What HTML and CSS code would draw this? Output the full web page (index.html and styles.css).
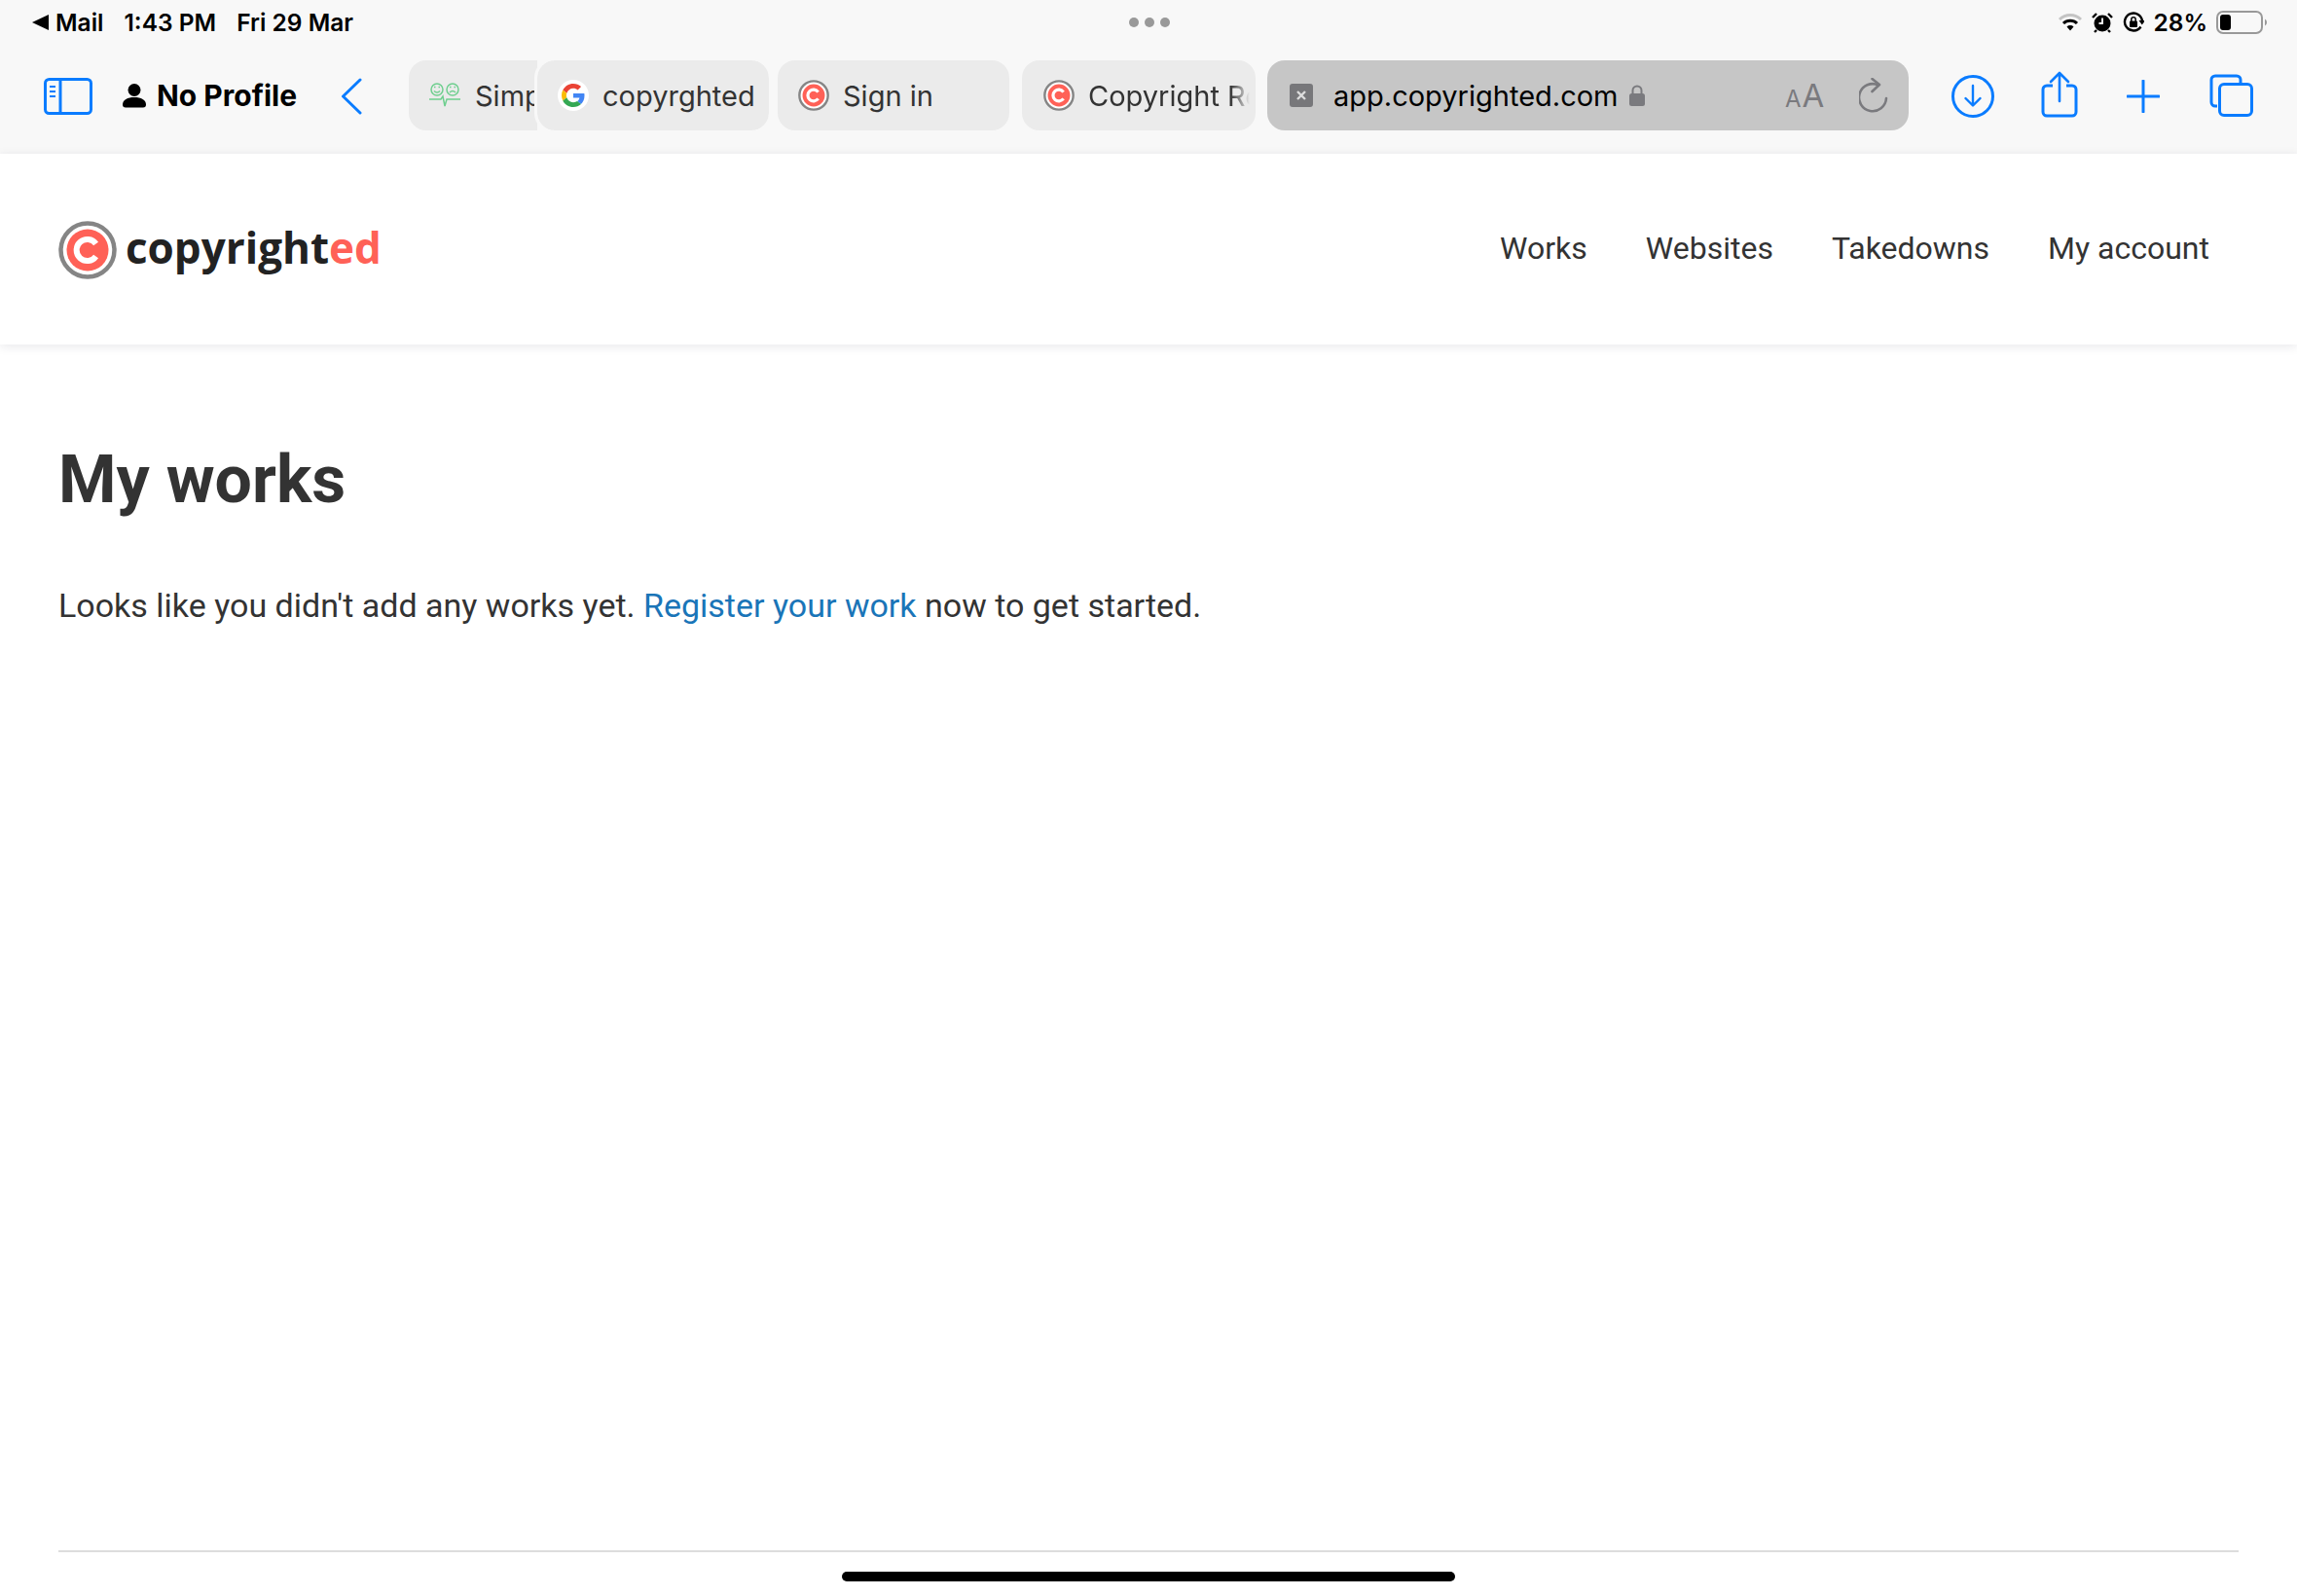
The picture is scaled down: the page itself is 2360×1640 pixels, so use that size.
FILE: index.html
```html
<!DOCTYPE html>
<html lang="en">
<head>
<meta charset="utf-8">
<title>My works</title>
<link rel="stylesheet" href="styles.css">
</head>
<body>
<svg class="defs" width="0" height="0" aria-hidden="true">
  <symbol id="c-logo" viewBox="0 0 60 60">
    <circle cx="30" cy="30" r="27.5" fill="#fff" stroke="#858585" stroke-width="4.5"/>
    <circle cx="30" cy="30" r="21.5" fill="#ff6157"/>
    <path d="M38.6 23.6a11 11 0 1 0 0 12.8" fill="none" stroke="#fff" stroke-width="6"/>
  </symbol>
</svg>
<div class="chrome">
  <div class="status">
    <div class="status-left">
      <svg class="back-tri" viewBox="0 0 17 16"><path d="M17 0v16L0 8z" fill="#000"/></svg>
      <span class="mail">Mail</span>
      <span class="time">1:43 PM</span>
      <span class="date">Fri 29 Mar</span>
    </div>
    <div class="dots"><i></i><i></i><i></i></div>
    <div class="status-right">
      <svg class="wifi" viewBox="0 0 26 20">
        <path d="M2 7a16 16 0 0 1 22 0" fill="none" stroke="#c4c4c4" stroke-width="3"/>
        <path d="M6 11a10 10 0 0 1 14 0" fill="none" stroke="#000" stroke-width="3"/>
        <path d="M9.5 14.5a5 5 0 0 1 7 0L13 18.5z" fill="#000"/>
      </svg>
      <svg class="alarm" viewBox="0 0 22 22">
        <circle cx="11" cy="12" r="8.5" fill="#000"/>
        <path d="M1 6l4-4M21 6l-4-4M5 19l-2 2M17 19l2 2" stroke="#000" stroke-width="2.4" fill="none"/>
        <path d="M11 6.5V12H7.5" stroke="#fff" stroke-width="1.8" fill="none"/>
      </svg>
      <svg class="rotlock" viewBox="0 0 22 22">
        <path d="M18.5 15.5A9 9 0 1 1 20 10" fill="none" stroke="#000" stroke-width="2.4"/>
        <path d="M16.5 9h6.5l-3.2 4.5z" fill="#000"/>
        <rect x="7" y="9.5" width="8" height="6.5" rx="1" fill="#000"/>
        <path d="M8.8 10V8a2.2 2.2 0 0 1 4.4 0v2" fill="none" stroke="#000" stroke-width="1.5"/>
      </svg>
      <span class="pct">28%</span>
      <svg class="battery" viewBox="0 0 53 24">
        <rect x="1" y="1" width="46" height="22" rx="6" fill="none" stroke="#999" stroke-width="2"/>
        <rect x="4" y="4" width="11" height="16" rx="3" fill="#000"/>
        <path d="M50 8.500a4 4 0 0 1 0 7z" fill="#999"/>
      </svg>
    </div>
  </div>
  <div class="toolbar">
    <svg class="ic-sidebar" viewBox="0 0 50 38">
      <rect x="1.500" y="1.500" width="47" height="35" rx="4" fill="none" stroke="#0a7cff" stroke-width="3"/>
      <path d="M17 2v34" stroke="#0a7cff" stroke-width="3"/>
      <path d="M6 9h6M6 14h6M6 19h6" stroke="#0a7cff" stroke-width="2"/>
    </svg>
    <div class="profile">
      <svg class="ic-person" viewBox="0 0 26 26">
        <circle cx="13" cy="7" r="6.500" fill="#000"/>
        <path d="M1 22c0-5 5-7.500 12-7.500S25 17 25 22c0 2-1 3-3 3H4c-2 0-3-1-3-3z" fill="#000"/>
      </svg>
      <span>No Profile</span>
    </div>
    <svg class="ic-back" viewBox="0 0 22 38"><path d="M20 2L2.500 19 20 36" fill="none" stroke="#0a7cff" stroke-width="3" stroke-linecap="round" stroke-linejoin="round"/></svg>
    <div class="tabs">
      <div class="tab tab-simp">
        <svg class="fav-simp" viewBox="0 0 32 26">
          <g fill="none" stroke="#6fcf8f" stroke-width="1.500">
            <circle cx="8" cy="7" r="6"/><circle cx="24" cy="7" r="6"/>
            <path d="M5 8.500q3 3 6 0M21 10q3-3 6 0"/>
            <path d="M0 17h12l2-3 2 10 2-7h14"/>
          </g>
          <path d="M5 4.500h1.500M9.500 4.500H11M21 4.500h1.500M25.500 4.500H27" stroke="#6fcf8f" stroke-width="1.500"/>
        </svg>
        <span class="tab-label clip">Simple Feedback</span>
      </div>
      <div class="tab tab-google">
        <span class="g-badge">
          <svg viewBox="0 0 48 48">
            <path fill="#ea4335" d="M24 9.500c3.500 0 6.700 1.200 9.200 3.600l6.900-6.900C35.900 2.400 30.500 0 24 0 14.600 0 6.500 5.400 2.600 13.200l8 6.200C12.500 13.600 17.800 9.500 24 9.500z"/>
            <path fill="#4285f4" d="M47 24.500c0-1.600-.1-3.100-.4-4.500H24v9h12.900c-.6 3-2.200 5.500-4.700 7.200l7.700 6C44.400 38 47 31.800 47 24.500z"/>
            <path fill="#fbbc05" d="M10.600 28.600c-.5-1.400-.8-3-.8-4.600s.3-3.200.8-4.600l-8-6.200C.9 16.500 0 20.100 0 24s.9 7.500 2.600 10.800l8-6.200z"/>
            <path fill="#34a853" d="M24 48c6.500 0 11.900-2.100 15.900-5.800l-7.700-6c-2.200 1.500-4.900 2.300-8.200 2.300-6.200 0-11.500-4.100-13.400-9.900l-8 6.200C6.500 42.600 14.600 48 24 48z"/>
          </svg>
        </span>
        <span class="tab-label">copyrghted</span>
      </div>
      <div class="tab tab-sign">
        <svg class="fav-c"><use href="#c-logo"/></svg>
        <span class="tab-label">Sign in</span>
      </div>
      <div class="tab tab-copy">
        <svg class="fav-c"><use href="#c-logo"/></svg>
        <span class="tab-label fade">Copyright Re</span>
      </div>
      <div class="address">
        <span class="x-badge">
          <svg viewBox="0 0 24 24"><path d="M8 8l8 8M16 8l-8 8" stroke="#ddd" stroke-width="2.400" fill="none"/></svg>
        </span>
        <span class="url">app.copyrighted.com</span>
        <svg class="ic-lock" viewBox="0 0 16 22">
          <rect x="0" y="9" width="16" height="13" rx="2.500" fill="#7a7a7e"/>
          <path d="M3.500 10V6a4.500 4.500 0 0 1 9 0v4" fill="none" stroke="#7a7a7e" stroke-width="2"/>
        </svg>
        <span class="aa"><small>A</small>A</span>
        <svg class="ic-reload" viewBox="0 0 30 36">
          <path d="M20 7.500A14 14 0 1 0 28 21" fill="none" stroke="#7a7a7e" stroke-width="2.600" stroke-linecap="round"/>
          <path d="M13.500 1l7.500 6-7.500 7" fill="none" stroke="#7a7a7e" stroke-width="2.600" stroke-linecap="round" stroke-linejoin="round"/>
        </svg>
      </div>
    </div>
    <svg class="ic-download" viewBox="0 0 44 44">
      <circle cx="22" cy="22" r="20.500" fill="none" stroke="#0a7cff" stroke-width="3"/>
      <path d="M22 11v20M14.500 24l7.500 7.500 7.500-7.500" fill="none" stroke="#0a7cff" stroke-width="2.400" stroke-linecap="round" stroke-linejoin="round"/>
    </svg>
    <svg class="ic-share" viewBox="0 0 38 48">
      <path d="M12 15H6a4 4 0 0 0-4 4v23a4 4 0 0 0 4 4h26a4 4 0 0 0 4-4V19a4 4 0 0 0-4-4h-6" fill="none" stroke="#0a7cff" stroke-width="3"/>
      <path d="M19 31V2M10 11l9-9 9 9" fill="none" stroke="#0a7cff" stroke-width="2.600" stroke-linecap="round" stroke-linejoin="round"/>
    </svg>
    <svg class="ic-plus" viewBox="0 0 34 34"><path d="M17 1v32M1 17h32" stroke="#0a7cff" stroke-width="3" stroke-linecap="round"/></svg>
    <svg class="ic-tabs" viewBox="0 0 45 44">
      <path d="M8 33H6a4 4 0 0 1-4-4V6a4 4 0 0 1 4-4h22a4 4 0 0 1 4 4v3" fill="none" stroke="#0a7cff" stroke-width="3"/>
      <rect x="10.500" y="10.500" width="33" height="32" rx="4.500" fill="none" stroke="#0a7cff" stroke-width="3"/>
    </svg>
  </div>
</div>

<header class="site-header">
  <a class="brand" href="#">
    <svg class="brand-mark"><use href="#c-logo"/></svg>
    <span class="brand-name">copyright<em>ed</em></span>
  </a>
  <nav class="site-nav">
    <a href="#">Works</a>
    <a href="#">Websites</a>
    <a href="#">Takedowns</a>
    <a href="#">My account</a>
  </nav>
</header>

<main class="content">
  <h1>My works</h1>
  <p>Looks like you didn't add any works yet. <a href="#">Register your work</a> now to get started.</p>
</main>

<footer class="site-footer"></footer>
<div class="home-indicator"></div>
</body>
</html>
```

FILE: styles.css
```css
* { box-sizing: border-box; }
html, body { height: 100%; }
body {
  margin: 0;
  height: 1640px;
  overflow: hidden;
  display: flex;
  flex-direction: column;
  position: relative;
  background: #fff;
  color: #333;
  font-family: Roboto, "Liberation Sans", sans-serif;
}
.defs { position: absolute; }
svg { display: block; flex: none; }

/* Browser chrome */
.chrome { height: 158px; background: #f8f8f8; flex: none; font-family: Inter, "Liberation Sans", sans-serif; }
.status {
  height: 46px;
  display: grid;
  grid-template-columns: 1fr auto 1fr;
  align-items: center;
  padding: 0 30px 0 33px;
  color: #000;
  font-size: 24.5px;
  font-weight: 600;
}
.status-left { display: flex; align-items: center; }
.back-tri { width: 17px; height: 16px; }
.mail { margin-left: 7px; }
.time { margin-left: 21px; }
.date { margin-left: 21px; }
.dots { display: flex; gap: 6px; margin-left: -2px; }
.dots i { width: 10px; height: 10px; border-radius: 50%; background: #999; }
.status-right { display: flex; align-items: center; justify-content: flex-end; }
.wifi { width: 26px; height: 20px; }
.alarm { width: 22px; height: 22px; margin-left: 9px; }
.rotlock { width: 22px; height: 22px; margin-left: 10px; }
.pct { margin-left: 9px; }
.battery { width: 53px; height: 24px; margin-left: 9px; }

.toolbar { height: 112px; display: flex; align-items: flex-start; padding: 16px 0 0 45px; }
.ic-sidebar { width: 50px; height: 38px; margin-right: 30px; margin-top: 18px; }
.profile {
  width: 181px;
  height: 72px;
  display: flex;
  align-items: center;
  gap: 10px;
  font-size: 30px;
  font-weight: 700;
  color: #000;
  margin-right: 44px;
}
.ic-person { width: 26px; height: 27px; }
.ic-back { width: 22px; height: 38px; margin-top: 18px; margin-right: 48px; }

.tabs { display: flex; width: 1541px; height: 72px; margin-right: 44px; flex: none; }
.tab {
  background: #ebebeb;
  border-radius: 18px;
  height: 72px;
  display: flex;
  align-items: center;
  font-size: 29px;
  color: #333;
  overflow: hidden;
  flex: none;
  white-space: nowrap;
}
.tab-label { display: block; }
.clip { overflow: hidden; }
.fade { -webkit-mask-image: linear-gradient(90deg, #000 88%, transparent 100%); mask-image: linear-gradient(90deg, #000 88%, transparent 100%); overflow: hidden; width: 166px; }
.tab-simp { width: 132px; padding-left: 21px; border-radius: 18px 0 0 18px; gap: 15px; }
.tab-simp .tab-label { width: 64px; }
.fav-simp { width: 32px; height: 26px; }
.tab-google {
  width: 238px;
  padding-left: 21px;
  gap: 14px;
  outline: 3px solid #f8f8f8;
  position: relative;
}
.g-badge {
  width: 32px;
  height: 32px;
  border-radius: 50%;
  background: #fff;
  padding: 4px;
  flex: none;
}
.tab-sign { width: 238px; margin-left: 9px; padding-left: 21px; gap: 14px; }
.tab-copy { width: 240px; margin-left: 13px; padding-left: 22px; gap: 14px; }
.fav-c { width: 32px; height: 32px; }
.address {
  width: 659px;
  height: 72px;
  margin-left: 12px;
  background: #c6c6c6;
  border-radius: 18px;
  display: flex;
  align-items: center;
  font-size: 29px;
  color: #000;
  padding-left: 23px;
}
.x-badge { width: 24px; height: 24px; background: #77777a; border-radius: 3px; flex: none; }
.url { margin-left: 21px; width: 291px; white-space: nowrap; }
.ic-lock { width: 16px; height: 22px; margin-left: 13px; }
.aa {
  margin-left: 144px;
  width: 37px;
  font-size: 33px;
  color: #7a7a7e;
  font-weight: 400;
  white-space: nowrap;
  display: flex;
  align-items: baseline;
}
.aa small { font-size: 24px; margin-right: 1px; }
.ic-reload { width: 30px; height: 36px; margin-left: 39px; }
.ic-download { width: 44px; height: 44px; margin-top: 15px; margin-right: 48px; }
.ic-share { width: 38px; height: 48px; margin-top: 11px; margin-right: 50px; }
.ic-plus { width: 34px; height: 34px; margin-top: 20px; margin-right: 51px; }
.ic-tabs { width: 45px; height: 44px; margin-top: 14px; }

/* Site header */
.site-header {
  height: 196px;
  flex: none;
  display: flex;
  align-items: center;
  justify-content: space-between;
  padding: 0 90px 0 60px;
  background: #fff;
  box-shadow: 0 2px 10px rgba(30, 30, 60, 0.1);
  position: relative;
}
.brand { display: flex; align-items: center; gap: 9px; margin-top: 2px; text-decoration: none; color: #222; }
.brand-mark { width: 60px; height: 60px; }
.brand-name { font-family: "Open Sans", "Noto Sans", sans-serif; font-weight: 700; font-size: 44px; line-height: 1; position: relative; top: -3px; }
.brand-name em { font-style: normal; color: #ff6157; }
.site-nav { display: flex; gap: 60px; margin-top: -3px; }
.site-nav a { color: #333; text-decoration: none; font-size: 32px; }

/* Main */
.content { flex: 1; padding: 97px 60px 0; }
.content h1 { margin: 0 0 63px; font-size: 68px; line-height: 84px; font-weight: 700; color: #333; }
.content p { margin: 0; font-size: 34px; line-height: 48px; color: #333; }
.content p a { color: #1a75b8; text-decoration: none; }

.site-footer { height: 47px; flex: none; margin: 0 60px; border-top: 2px solid #ddd; }
.home-indicator {
  position: absolute;
  left: 865px;
  top: 1615px;
  width: 630px;
  height: 10px;
  border-radius: 5px;
  background: #000;
}
```
